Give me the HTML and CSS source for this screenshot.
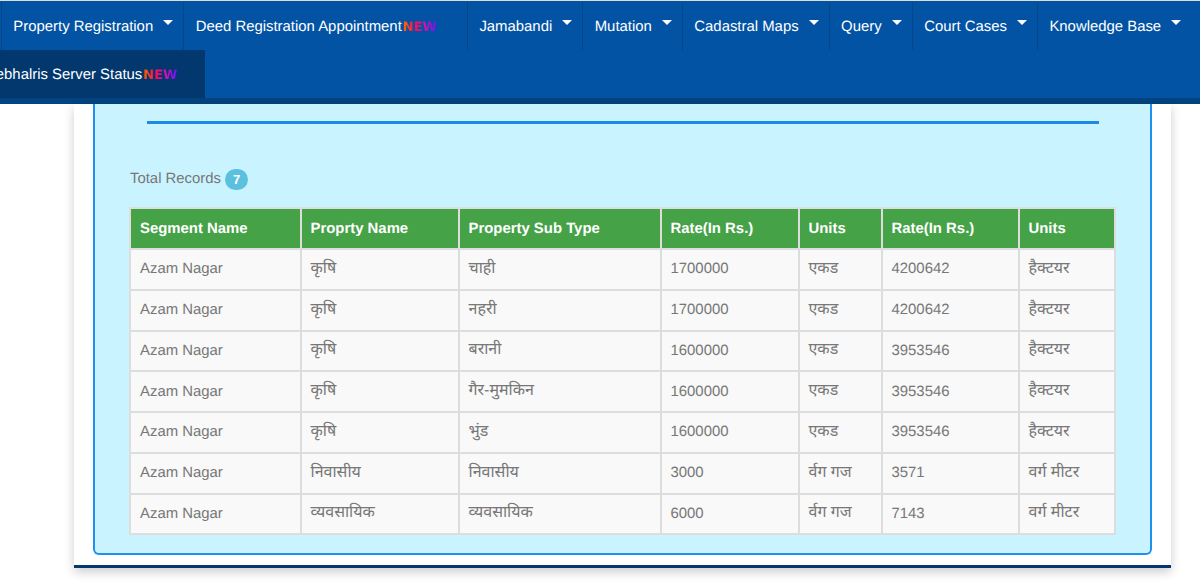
FILE: index.html
```html
<!DOCTYPE html>
<html lang="en">
<head>
  <meta charset="UTF-8" />
  <meta name="viewport" content="width=device-width, initial-scale=1.0"/>
  <title>Circle Rates</title>
  <link rel="stylesheet" href="styles.css">
</head>
<body>
  <nav class="navbar">
    <a class="nav-item" href="#">Property Registration<span class="caret"></span></a>
    <a class="nav-item" href="#">Deed Registration Appointment<span class="new-tag">NEW</span></a>
    <a class="nav-item" href="#">Jamabandi<span class="caret"></span></a>
    <a class="nav-item" href="#">Mutation<span class="caret"></span></a>
    <a class="nav-item" href="#">Cadastral Maps<span class="caret"></span></a>
    <a class="nav-item" href="#">Query<span class="caret"></span></a>
    <a class="nav-item" href="#">Court Cases<span class="caret"></span></a>
    <a class="nav-item" href="#">Knowledge Base<span class="caret"></span></a>
    <a class="nav-item nav-item-active" href="#">Webhalris Server Status<span class="new-tag">NEW</span></a>
  </nav>

  <div class="page-card">
    <div class="rates-box">
      <hr class="rule" />
      <p class="total">Total Records <span class="badge">7</span></p>
      <table class="rates">
        <colgroup>
          <col class="c-segment" /><col class="c-name" /><col class="c-sub" /><col class="c-rate" />
          <col class="c-unit" /><col class="c-rate2" /><col class="c-unit2" />
        </colgroup>
        <thead>
          <tr>
            <th>Segment Name</th><th>Proprty Name</th><th>Property Sub Type</th><th>Rate(In Rs.)</th>
            <th>Units</th><th>Rate(In Rs.)</th><th>Units</th>
          </tr>
        </thead>
        <tbody>
          <tr><td>Azam Nagar</td><td class="hi">कृषि</td><td class="hi">चाही</td><td>1700000</td><td class="hi">एकड</td><td>4200642</td><td class="hi">हैक्टयर</td></tr>
          <tr><td>Azam Nagar</td><td class="hi">कृषि</td><td class="hi">नहरी</td><td>1700000</td><td class="hi">एकड</td><td>4200642</td><td class="hi">हैक्टयर</td></tr>
          <tr><td>Azam Nagar</td><td class="hi">कृषि</td><td class="hi">बरानी</td><td>1600000</td><td class="hi">एकड</td><td>3953546</td><td class="hi">हैक्टयर</td></tr>
          <tr><td>Azam Nagar</td><td class="hi">कृषि</td><td class="hi">गैर-मुमकिन</td><td>1600000</td><td class="hi">एकड</td><td>3953546</td><td class="hi">हैक्टयर</td></tr>
          <tr><td>Azam Nagar</td><td class="hi">कृषि</td><td class="hi">भुंड</td><td>1600000</td><td class="hi">एकड</td><td>3953546</td><td class="hi">हैक्टयर</td></tr>
          <tr><td>Azam Nagar</td><td class="hi">निवासीय</td><td class="hi">निवासीय</td><td>3000</td><td class="hi">र्वग गज</td><td>3571</td><td class="hi">वर्ग मीटर</td></tr>
          <tr><td>Azam Nagar</td><td class="hi">व्यवसायिक</td><td class="hi">व्यवसायिक</td><td>6000</td><td class="hi">र्वग गज</td><td>7143</td><td class="hi">वर्ग मीटर</td></tr>
        </tbody>
      </table>
    </div>
  </div>
</body>
</html>
```

FILE: styles.css
```css
* {
  box-sizing: border-box;
}

html, body {
  height: 582px;
  overflow: hidden;
}

body {
  margin: 0;
  background: #fff;
  color: #777;
  font-family: "Liberation Sans", "Noto Sans Devanagari", "Noto Sans", sans-serif;
  font-size: 14.9px;
  text-rendering: geometricPrecision;
}

.navbar {
  display: flex;
  flex-wrap: wrap;
  align-content: flex-start;
  height: 104px;
  padding: 1px 0 0 1px;
  background: #0353a4;
  border-top: 1px solid #ddd;
  border-bottom: 6px solid #03437f;
}

.nav-item {
  display: flex;
  align-items: center;
  height: 48px;
  padding: 2px 10.2px 0 11.3px;
  border-left: 1px solid #03468c;
  color: #fff;
  text-decoration: none;
  white-space: nowrap;
}

.nav-item-active {
  margin-left: -31px;
  padding-right: 8px;
  padding-left: 12px;
  background: #03386f;
  border-left: 0;
}

.caret {
  width: 0;
  height: 0;
  margin: 0 0 9px 10px;
  border-top: 5.5px solid #fff;
  border-left: 5px solid transparent;
  border-right: 5px solid transparent;
}

.new-tag {
  margin: 1px 20px 0 1px;
  background: linear-gradient(90deg, #ff6a00, #ff0a54 35%, #e6109c 60%, #6a11ff);
  -webkit-background-clip: text;
  background-clip: text;
  color: transparent;
  font-family: "DejaVu Sans", sans-serif;
  font-size: 13px;
  font-weight: bold;
}

.page-card {
  width: 1097px;
  height: 464px;
  margin-left: 74px;
  padding: 0 19px;
  background: #fff;
  border-bottom: 3px solid #03386f;
  box-shadow: 0 4px 10px rgba(0, 0, 0, 0.2);
}

.rates-box {
  height: 451px;
  padding: 17px 35px 0;
  background: #c9f4ff;
  border: 2px solid #1e90f0;
  border-top: 0;
  border-radius: 0 0 6px 6px;
}

.rule {
  width: 952px;
  height: 3px;
  margin: 0 0 0 17px;
  border: 0;
  background: #1e88e5;
}

.total {
  display: flex;
  align-items: center;
  gap: 4px;
  height: 24px;
  margin: 43px 0 16px 0;
}

.badge {
  display: inline-block;
  min-width: 23px;
  height: 21px;
  margin-top: 1px;
  border-radius: 11px;
  background: #5bc0de;
  color: #fff;
  font-size: 13px;
  font-weight: bold;
  line-height: 21px;
  text-align: center;
}

.rates {
  width: 985px;
  margin-left: -1px;
  table-layout: fixed;
  border-collapse: collapse;
  background: #f9f9f9;
}

.c-segment { width: 170.5px; }
.c-name { width: 158px; }
.c-sub { width: 202px; }
.c-rate { width: 138px; }
.c-unit { width: 83px; }
.c-rate2 { width: 137px; }
.c-unit2 { width: 96.5px; }

.rates th,
.rates td {
  padding: 0 9px;
  border: 2px solid #ddd;
  text-align: left;
  white-space: nowrap;
}

.rates th {
  height: 41px;
  background: #45a247;
  color: #fff;
  font-weight: bold;
}

.rates td {
  height: 40.76px;
}

.rates .hi {
  font-size: 16px;
}
```
